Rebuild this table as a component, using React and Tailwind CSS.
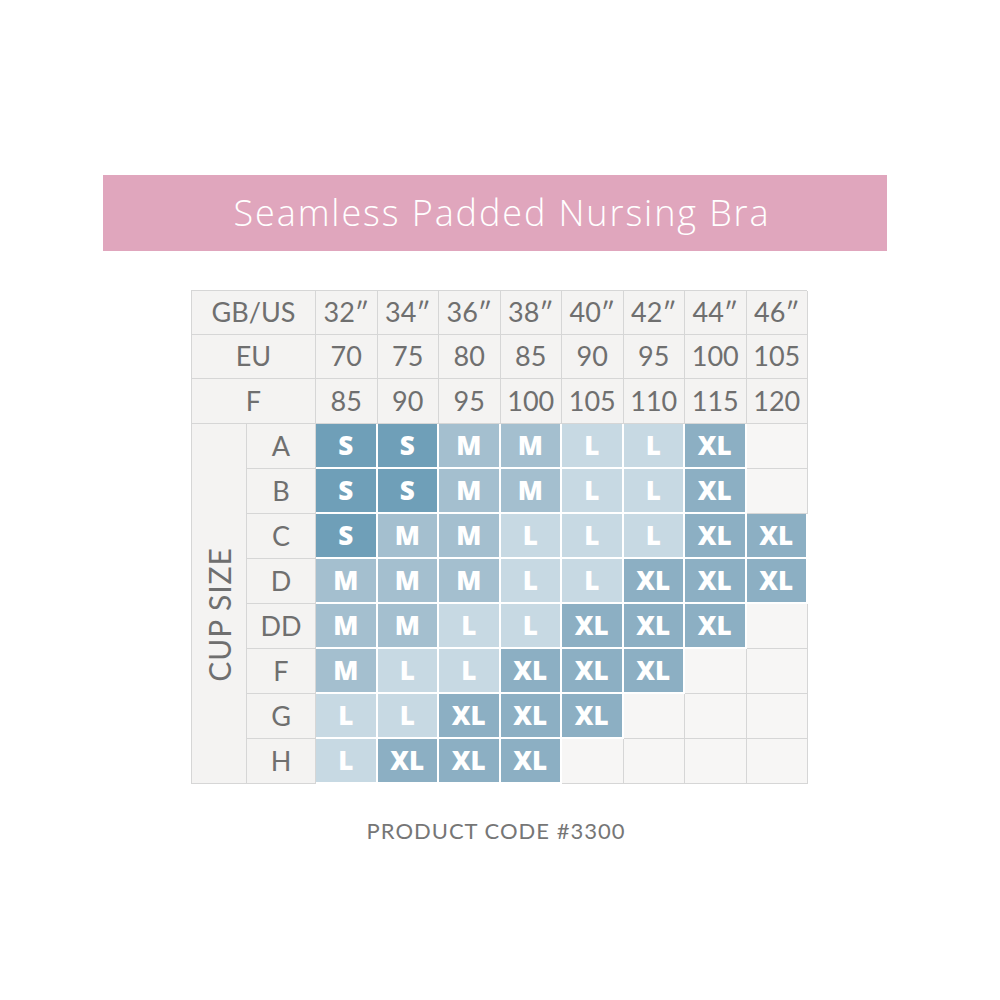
import React from "react";

const SIZES = ["32″", "34″", "36″", "38″", "40″", "42″", "44″", "46″"];
const EU = ["70", "75", "80", "85", "90", "95", "100", "105"];
const FR = ["85", "90", "95", "100", "105", "110", "115", "120"];
const CUPS = [
  ["A", ["S", "S", "M", "M", "L", "L", "XL", ""]],
  ["B", ["S", "S", "M", "M", "L", "L", "XL", ""]],
  ["C", ["S", "M", "M", "L", "L", "L", "XL", "XL"]],
  ["D", ["M", "M", "M", "L", "L", "XL", "XL", "XL"]],
  ["DD", ["M", "M", "L", "L", "XL", "XL", "XL", ""]],
  ["F", ["M", "L", "L", "XL", "XL", "XL", "", ""]],
  ["G", ["L", "L", "XL", "XL", "XL", "", "", ""]],
  ["H", ["L", "XL", "XL", "XL", "", "", "", ""]],
];

const BG = {
  S: "bg-[#6f9fb8]",
  M: "bg-[#a4bfcf]",
  L: "bg-[#c7d9e3]",
  XL: "bg-[#8cafc3]",
};

const font = { fontFamily: "Lato, 'Open Sans', sans-serif" };
const bannerFont = { fontFamily: "'Open Sans', Lato, sans-serif" };
const boldFont = { fontFamily: "'Open Sans', Lato, sans-serif" };

function HeadCell({ children, span }) {
  return (
    <div
      className={`flex items-center justify-center border-r border-b border-[#d6d6d6] bg-[#f4f3f2] text-[27px] text-[#6f6f6f] ${span ? "col-span-2" : ""}`}
      style={font}
    >
      {children}
    </div>
  );
}

function SizeCell({ v }) {
  if (!v) {
    return <div className="border-r border-b border-[#d6d6d6] bg-[#f7f6f5]" />;
  }
  return (
    <div
      className={`flex items-center justify-center border-r-2 border-b-2 border-white text-[26px] font-extrabold text-white ${BG[v]}`}
      style={boldFont}
    >
      {v}
    </div>
  );
}

export default function App() {
  return (
    <div className="min-h-[1000px] w-[1000px] bg-white pt-[175px]">
      <div className="ml-[103px] flex h-[76px] w-[784px] items-center justify-center bg-[#e0a6bd] pl-[14px]">
        <span className="text-[36px] font-light tracking-[1.9px] text-white" style={bannerFont}>
          Seamless Padded Nursing Bra
        </span>
      </div>

      <div
        className="ml-[191px] mt-[39px] grid w-[616px] grid-cols-[55px_69px_repeat(8,61.5px)] grid-rows-[44px_44px_45px_repeat(8,45px)] border-t border-l border-[#d6d6d6]"
      >
        <HeadCell span>GB/US</HeadCell>
        {SIZES.map((s) => (
          <HeadCell key={"s" + s}>{s}</HeadCell>
        ))}
        <HeadCell span>EU</HeadCell>
        {EU.map((s) => (
          <HeadCell key={"e" + s}>{s}</HeadCell>
        ))}
        <HeadCell span>F</HeadCell>
        {FR.map((s) => (
          <HeadCell key={"f" + s}>{s}</HeadCell>
        ))}

        <div className="row-span-8 flex items-center justify-center border-r border-b border-[#d6d6d6] bg-[#f4f3f2] pt-[22px]">
          <span
            className="-rotate-90 whitespace-nowrap text-[30px] tracking-[0.9px] text-[#6f6f6f]"
            style={font}
          >
            CUP SIZE
          </span>
        </div>
        {CUPS.map(([cup, vals]) => (
          <React.Fragment key={cup}>
            <HeadCell>{cup}</HeadCell>
            {vals.map((v, i) => (
              <SizeCell key={cup + i} v={v} />
            ))}
          </React.Fragment>
        ))}
      </div>

      <div className="mt-[30px] w-[992px] text-center text-[22px] tracking-[1px] text-[#767676]" style={font}>
        PRODUCT CODE #3300
      </div>
    </div>
  );
}
